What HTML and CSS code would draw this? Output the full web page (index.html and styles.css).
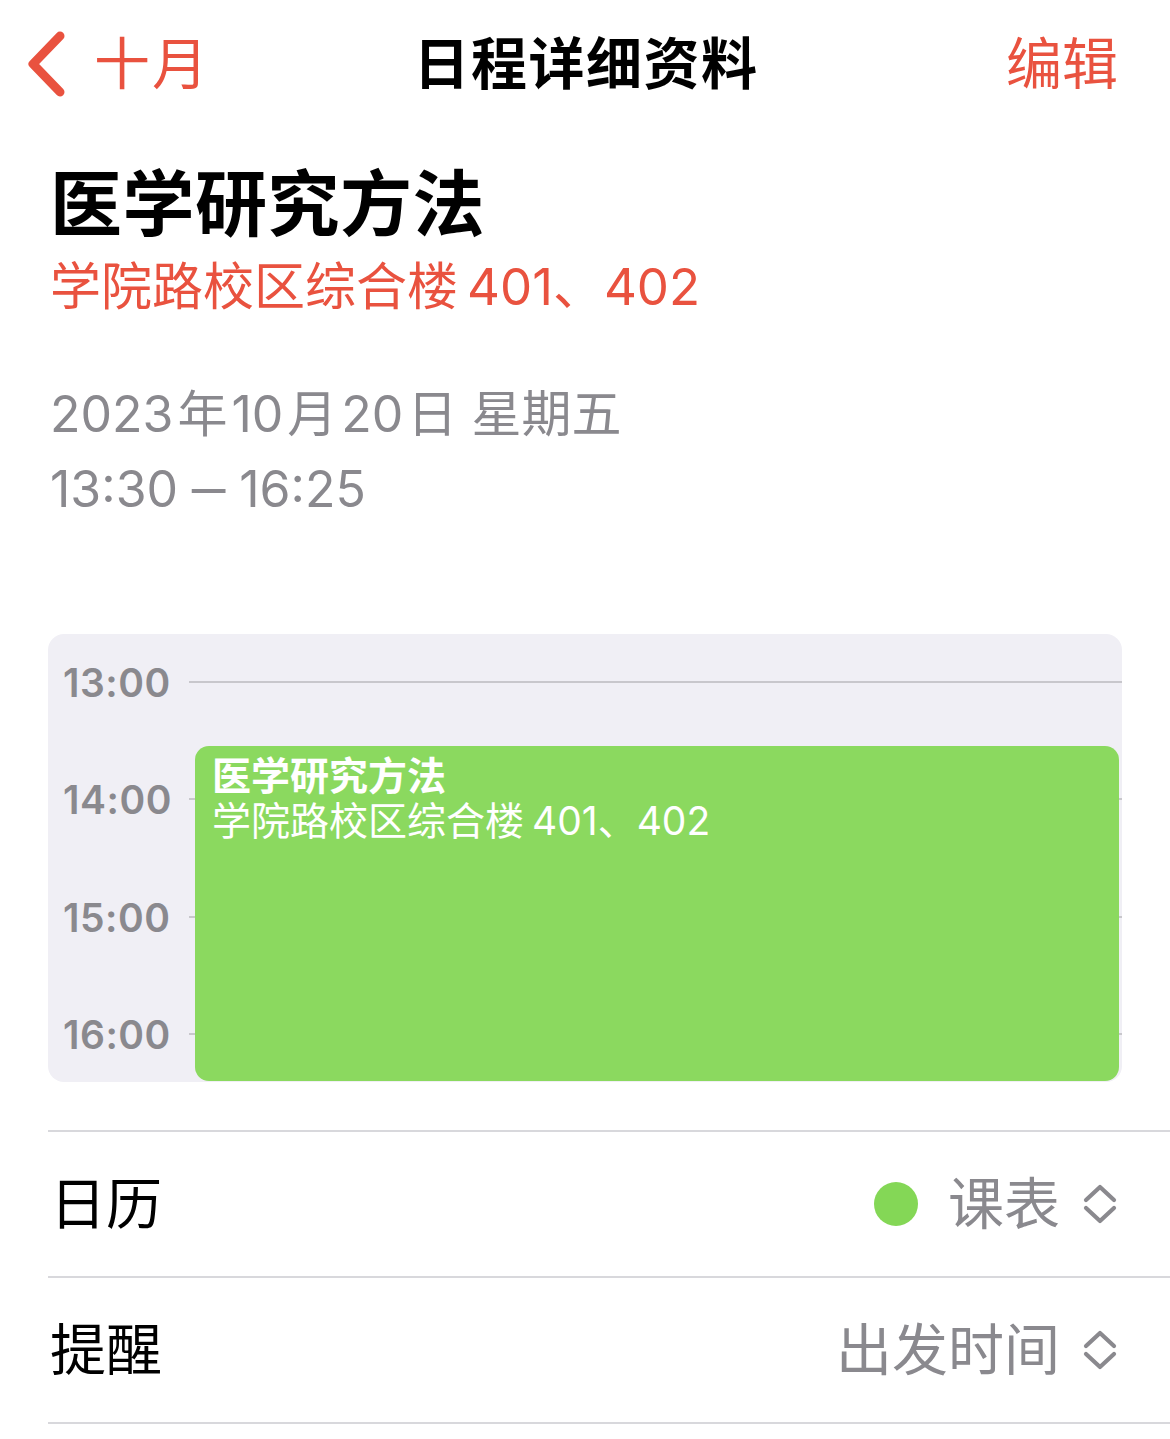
FILE: index.html
```html
<!DOCTYPE html>
<html lang="zh-CN">
<head>
<meta charset="utf-8">
<title>日程详细资料</title>
<link rel="stylesheet" href="styles.css">
</head>
<body>
<div class="screen">
  <header class="nav">
    <div class="nav-left">
      <svg class="back" width="40" height="66" viewBox="0 0 40 66" aria-hidden="true">
        <path d="M34 5 L7 33 L34 61" fill="none" stroke="#e9523f" stroke-width="9" stroke-linecap="round" stroke-linejoin="round"/>
      </svg>
      <span class="nav-back-text">十月</span>
    </div>
    <div class="nav-title">日程详细资料</div>
    <div class="nav-right">编辑</div>
  </header>

  <section class="info">
    <h1 class="event-title">医学研究方法</h1>
    <div class="event-location">学院路校区综合楼<span class="room">401、402</span></div>
    <div class="event-date"><span class="num first">2023</span>年<span class="num">10</span>月<span class="num">20</span>日 星期五</div>
    <div class="event-time">13:30 <span class="dash">–</span> 16:25</div>
  </section>

  <section class="timeline">
    <div class="hour"><span class="hour-label">13:00</span><span class="hour-line"></span></div>
    <div class="hour"><span class="hour-label">14:00</span><span class="hour-line"></span></div>
    <div class="hour"><span class="hour-label">15:00</span><span class="hour-line"></span></div>
    <div class="hour"><span class="hour-label">16:00</span><span class="hour-line"></span></div>
    <div class="event-block">
      <div class="block-title">医学研究方法</div>
      <div class="block-sub">学院路校区综合楼<span class="room-sm">401、402</span></div>
    </div>
  </section>

  <ul class="settings">
    <li class="setting">
      <span class="setting-label">日历</span>
      <span class="setting-value">
        <span class="cal-dot"></span>
        <span class="value-text">课表</span>
        <svg class="updown" width="36" height="42" viewBox="0 0 36 42" aria-hidden="true">
          <path d="M4 17 L18 4 L32 17 M4 25 L18 38 L32 25" fill="none" stroke="#8a898e" stroke-width="4.2" stroke-linecap="round" stroke-linejoin="round"/>
        </svg>
      </span>
    </li>
    <li class="setting">
      <span class="setting-label">提醒</span>
      <span class="setting-value">
        <span class="value-text">出发时间</span>
        <svg class="updown" width="36" height="42" viewBox="0 0 36 42" aria-hidden="true">
          <path d="M4 17 L18 4 L32 17 M4 25 L18 38 L32 25" fill="none" stroke="#8a898e" stroke-width="4.2" stroke-linecap="round" stroke-linejoin="round"/>
        </svg>
      </span>
    </li>
  </ul>
</div>
</body>
</html>
```

FILE: styles.css
```css
* { box-sizing: border-box; }

html, body {
  margin: 0;
  padding: 0;
  background: #ffffff;
}

body {
  font-family: Inter, "Noto Sans CJK SC", sans-serif;
  color: #000;
  width: 1170px;
  height: 1439px;
  overflow: hidden;
}

.screen {
  display: flex;
  flex-direction: column;
}

/* Navigation bar */
.nav {
  height: 128px;
  display: grid;
  grid-template-columns: 1fr auto 1fr;
  align-items: center;
  padding: 0 24px 0 26px;
}

.nav-left {
  display: flex;
  align-items: center;
  gap: 28px;
  color: #e9523f;
}

.back { display: block; }

.nav-back-text {
  font-size: 56px;
  line-height: 1;
  letter-spacing: 2px;
}

.nav-title {
  font-size: 56px;
  font-weight: 700;
  line-height: 1;
  letter-spacing: 1.5px;
}

.nav-right {
  justify-self: end;
  margin-right: 28px;
  color: #e9523f;
  font-size: 56px;
  line-height: 1;
}

/* Event info */
.info {
  padding-left: 50px;
  display: flex;
  flex-direction: column;
}

.event-title {
  margin: 34px 0 0;
  font-size: 72px;
  font-weight: 700;
  line-height: 84px;
  letter-spacing: 0.5px;
}

.event-location {
  margin-top: 9px;
  color: #e9523f;
  font-size: 51px;
  line-height: 64px;
}

.room {
  margin-left: 9px;
}

.event-date {
  margin-top: 58px;
  color: #8a898e;
  font-size: 50px;
  line-height: 74px;
}

.num {
  margin: 0 4px;
}

.num.first {
  margin-left: 0;
}

.event-time {
  margin-top: 1px;
  color: #8a898e;
  font-size: 50px;
  line-height: 74px;
}

.dash {
  display: inline-block;
  margin: 0 4px;
  transform: scaleX(1.35);
}

/* Timeline */
.timeline {
  position: relative;
  margin: 108px 48px 0 48px;
  height: 448px;
  background: #f0eff5;
  border-radius: 16px;
  padding: 29px 0 27px 15px;
  display: flex;
  flex-direction: column;
  gap: 77.33px;
}

.hour {
  height: 40px;
  display: flex;
  align-items: center;
}

.hour-label {
  width: 126px;
  flex: none;
  color: #8a898e;
  font-size: 39px;
  font-weight: 600;
  line-height: 40px;
  letter-spacing: 0.5px;
}

.hour-line {
  flex: 1;
  height: 2px;
  background: #c8c7cc;
  margin-top: -2px;
}

.event-block {
  position: absolute;
  left: 147px;
  right: 3px;
  top: 112px;
  height: 335px;
  background: #8bd95f;
  border-radius: 14px;
  padding: 7px 0 0 17px;
  color: #fff;
}

.block-title {
  font-size: 39px;
  font-weight: 600;
  line-height: 45px;
}

.block-sub {
  font-size: 39px;
  line-height: 45px;
}

.room-sm {
  margin-left: 8px;
}

/* Settings rows */
.settings {
  list-style: none;
  margin: 48px 0 0 48px;
  padding: 0;
  border-top: 2px solid #d8d8dc;
}

.setting {
  height: 146px;
  border-bottom: 2px solid #d8d8dc;
  display: flex;
  align-items: center;
  justify-content: space-between;
  padding-right: 52px;
}

.setting-label {
  font-size: 56px;
  line-height: 1;
  margin-left: 2px;
}

.setting-value {
  display: flex;
  align-items: center;
  color: #8a898e;
  font-size: 56px;
  line-height: 1;
}

.cal-dot {
  width: 44px;
  height: 44px;
  border-radius: 50%;
  background: #84d756;
  margin-right: 30px;
}

.value-text {
  margin-right: 22px;
}

.updown { display: block; }
```
